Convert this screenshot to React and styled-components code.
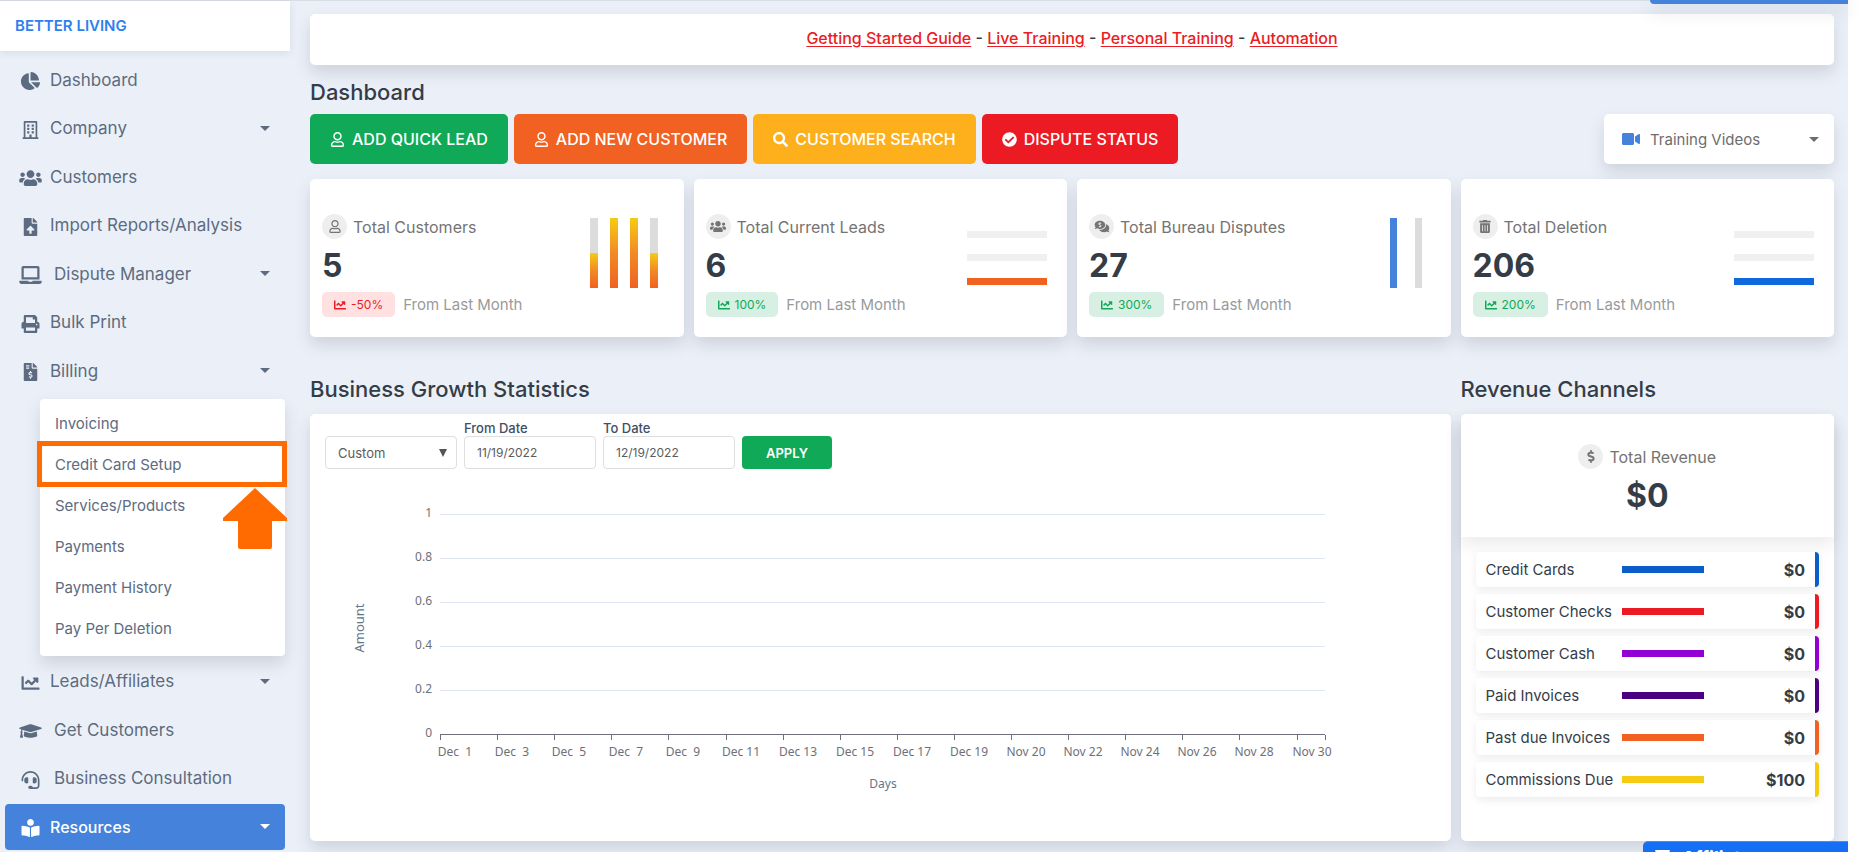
import React, { useState } from 'react';
import styled, { createGlobalStyle } from 'styled-components';
import {
    FaBookReader,
    FaChartLine,
    FaChartPie,
    FaCheckCircle,
    FaCommentsDollar,
    FaDollarSign,
    FaFileInvoiceDollar,
    FaFileUpload,
    FaFilter,
    FaGraduationCap,
    FaHeadset,
    FaLaptop,
    FaPrint,
    FaRegBuilding,
    FaRegUser,
    FaSearch,
    FaTrashAlt,
    FaUsers,
    FaVideo
} from 'react-icons/fa';

const GlobalStyle = createGlobalStyle`
    * {
        box-sizing: border-box;
    }

    body {
        margin: 0;
        background: #fff;
        color: #343d47;
        font-family: Inter, "Open Sans", sans-serif;
        font-size: 15px;
    }

    button, input, select {
        font-family: inherit;
    }
`;

const shadow = '0 8px 16px rgba(40, 50, 70, 0.15)';

const Layout = styled.div`
    display: flex;
    min-height: 100vh;
    margin-right: 14px;
    background: #ebf0f8;
    border-top: 1px solid #d8dde6;
`;

const Sidebar = styled.aside`
    flex: none;
    display: flex;
    flex-direction: column;
    width: 290px;
    height: calc(100vh - 1px);
    padding-bottom: 2px;
`;

const Brand = styled.a`
    padding: 0 15px;
    background: #fff;
    box-shadow: 0 2px 8px rgba(40, 50, 70, 0.1);
    color: #2f80ed;
    font-size: 15px;
    font-weight: 600;
    line-height: 50px;
    text-decoration: none;
`;

const NavList = styled.ul`
    flex: 1;
    display: flex;
    flex-direction: column;
    justify-content: space-between;
    margin: 0;
    padding: 6px 5px 0;
    list-style: none;
`;

const NavItem = styled.li``;

const NavLink = styled.a`
    display: flex;
    align-items: center;
    height: 46px;
    padding: 0 15px 1px 14px;
    border-radius: 4px;
    background: ${({ $active }) => ($active ? '#4482db' : 'transparent')};
    color: ${({ $active }) => ($active ? '#fff' : '#5d6b80')};
    font-size: ${({ $active }) => ($active ? 16 : 17)}px;
    font-weight: ${({ $active }) => ($active ? 500 : 400)};
    text-decoration: none;
`;

const NavIcon = styled.span`
    display: flex;
    justify-content: center;
    width: 23px;
    margin-right: ${({ $wide }) => ($wide ? 12 : 8)}px;
    padding-top: 3px;

    svg {
        width: 23px;
        height: 18px;
    }
`;

const Caret = styled.span`
    margin-left: auto;
    border-top: 5px solid currentColor;
    border-right: 5px solid transparent;
    border-left: 5px solid transparent;
`;

const SubMenu = styled.ul`
    margin: 5px 0 0 35px;
    padding: 4px 0 7px;
    border-radius: 4px;
    background: #fff;
    box-shadow: ${shadow};
    list-style: none;
`;

const SubItem = styled.li`
    position: relative;
`;

const SubLink = styled.a`
    display: block;
    padding: 0 15px;
    color: #5d6b80;
    font-size: 15px;
    line-height: 41px;
    text-decoration: none;
`;

const Highlight = styled.span`
    position: absolute;
    inset: -3px -2px -2px -3px;
    border: 5px solid #ff6b00;
    pointer-events: none;
`;

const Pointer = styled.svg`
    position: absolute;
    top: 44px;
    right: -2px;
    z-index: 1;
`;

const Main = styled.main`
    flex: 1;
    min-width: 0;
    padding: 13px 14px 10px 20px;
`;

const Card = styled.section`
    border-radius: 5px;
    background: #fff;
    box-shadow: ${shadow};
`;

const Notice = styled(Card)`
    padding: 14px 15px 16px;
    font-weight: 500;
    font-size: 16px;
    line-height: 21px;
    text-align: center;
`;

const NoticeLink = styled.a`
    color: #eb1c24;
    text-underline-offset: 2px;
`;

const Title = styled.h1`
    margin: 13px 0 8px;
    font-size: 22px;
    font-weight: 500;
    line-height: 28px;
`;

const SectionTitle = styled.h2`
    margin: 38px 0 11px;
    font-size: 22px;
    font-weight: 500;
    line-height: 28px;
`;

const Actions = styled.div`
    display: flex;
    gap: 6px;
    margin-bottom: 15px;
`;

const ActionButton = styled.button`
    display: flex;
    align-items: center;
    gap: 7px;
    height: 50px;
    padding: 0 20px;
    border: 0;
    border-radius: 5px;
    background: ${({ $color }) => $color};
    color: #fff;
    font-size: 16px;
    font-weight: 500;

    svg {
        width: 15px;
        height: 15px;
    }
`;

const VideosButton = styled.button`
    display: flex;
    align-items: center;
    gap: 10px;
    width: 230px;
    height: 50px;
    margin-left: auto;
    padding: 0 15px 0 18px;
    border: 0;
    border-radius: 5px;
    background: #fff;
    box-shadow: ${shadow};
    color: #6d6d6d;
    font-size: 15px;

    svg {
        color: #4482db;
        font-size: 18px;
    }
`;

const Grid = styled.div`
    display: grid;
    grid-template-columns: repeat(4, 1fr);
    column-gap: 10px;
`;

const Stat = styled(Card)`
    display: flex;
    justify-content: space-between;
    padding: 35px 20px 20px 12px;
`;

const StatHead = styled.div`
    display: flex;
    align-items: center;
    gap: 6px;
    height: 25px;
    color: #747474;
    font-size: 16px;
`;

const Round = styled.span`
    display: flex;
    align-items: center;
    justify-content: center;
    width: 25px;
    height: 25px;
    border-radius: 50%;
    background: #eee;

    svg {
        width: 16px;
        height: 13px;
    }
`;

const StatValue = styled.div`
    font-size: 32px;
    font-weight: 700;
    line-height: 53px;
`;

const StatFoot = styled.div`
    display: flex;
    align-items: center;
    gap: 8px;
    color: #9a9a9a;
    font-size: 15px;
`;

const Badge = styled.span`
    display: flex;
    align-items: center;
    gap: 5px;
    height: 25px;
    padding: 0 12px;
    border-radius: 5px;
    background: ${({ $down }) => ($down ? '#ffe1e2' : '#d8f0e3')};
    color: ${({ $down }) => ($down ? '#eb1c24' : '#10a957')};
    font-size: 12px;
`;

const MiniChart = styled.svg`
    flex: none;
    margin-top: 4px;
`;

const Growth = styled.div`
    grid-column: span 3;
`;

const Revenue = styled.div`
    display: flex;
    flex-direction: column;
`;

const GrowthCard = styled(Card)`
    padding: 6px 0 10px;
`;

const Filters = styled.form`
    display: flex;
    align-items: flex-end;
    gap: 7px;
    padding-left: 15px;
`;

const Field = styled.div`
    position: relative;
    display: flex;
    flex-direction: column;
    width: 132px;
`;

const FieldLabel = styled.label`
    color: #3f4f66;
    font-size: 13px;
    font-weight: 500;
    line-height: 16px;
`;

const Input = styled.input`
    width: 100%;
    height: 33px;
    padding: 0 12px;
    border: 1px solid #dedede;
    border-radius: 4px;
    background: #fff;
    color: #5c5c5c;
    font-size: 12px;
`;

const Select = styled.select`
    width: 100%;
    height: 33px;
    padding: 0 12px;
    border: 1px solid #dedede;
    border-radius: 4px;
    background: #fff;
    color: #5c5c5c;
    font-size: 13px;
    appearance: none;
`;

const SelectArrow = styled.svg`
    position: absolute;
    top: 13px;
    right: 10px;
    pointer-events: none;
`;

const ApplyButton = styled.button`
    width: 90px;
    height: 33px;
    border: 0;
    border-radius: 4px;
    background: #10a957;
    color: #fff;
    font-size: 13px;
    font-weight: 600;
`;

const Chart = styled.svg`
    display: block;
    max-width: 100%;
    margin-top: 10px;

    text {
        fill: #6e7079;
        font-family: "Noto Sans", sans-serif;
        font-size: 12px;
    }
`;

const AxisTitle = styled.text`
    && {
        fill: #64748b;
        font-size: ${({ $size }) => $size}px;
    }
`;

const RevenueCard = styled(Card)`
    flex: 1;
`;

const RevenueTotal = styled.div`
    display: flex;
    flex-direction: column;
    align-items: center;
    padding: 30px 0 15px;
    box-shadow: 0 8px 16px rgba(0, 0, 0, 0.08);
`;

const ChannelList = styled.ul`
    display: flex;
    flex-direction: column;
    gap: 7px;
    margin: 0;
    padding: 15px;
    list-style: none;
`;

const Channel = styled.li`
    display: flex;
    align-items: center;
    height: 35px;
    padding: 0 10px;
    border-right: 4px solid ${({ $color }) => $color};
    border-radius: 4px;
    background: #fff;
    box-shadow: 0 3px 8px rgba(0, 0, 0, 0.08);
    font-size: 15px;
`;

const ChannelName = styled.span`
    width: 136px;
    white-space: nowrap;
`;

const ChannelBar = styled.span`
    width: 82px;
    height: 7px;
    background: ${({ $color }) => $color};
`;

const ChannelValue = styled.strong`
    margin-left: auto;
    font-size: 16px;
    font-weight: 700;
`;

const TopTab = styled.div`
    position: fixed;
    top: 0;
    right: 14px;
    width: 198px;
    height: 4px;
    border-radius: 0 0 0 4px;
    background: #4482db;
    box-shadow: 0 6px 16px rgba(40, 50, 70, 0.25);
`;

const AffiliateButton = styled.button`
    position: fixed;
    right: 14px;
    bottom: -20px;
    display: flex;
    align-items: center;
    gap: 12px;
    width: 205px;
    height: 31px;
    padding: 0 12px;
    border: 0;
    border-top: 1px solid #6d87b0;
    border-radius: 5px 0 0 0;
    background: #146ff5;
    color: #fff;
    font-size: 18px;
    font-weight: 700;

    svg {
        width: 15px;
        height: 15px;
    }
`;

const billingLinks = [
    'Invoicing',
    'Credit Card Setup',
    'Services/Products',
    'Payments',
    'Payment History',
    'Pay Per Deletion'
];

const navItems = [
    { label: 'Dashboard', icon: FaChartPie },
    { label: 'Company', icon: FaRegBuilding, caret: true },
    { label: 'Customers', icon: FaUsers },
    { label: 'Import Reports/Analysis', icon: FaFileUpload },
    { label: 'Dispute Manager', icon: FaLaptop, caret: true, wide: true },
    { label: 'Bulk Print', icon: FaPrint },
    { label: 'Billing', icon: FaFileInvoiceDollar, caret: true, links: billingLinks },
    { label: 'Leads/Affiliates', icon: FaChartLine, caret: true },
    { label: 'Get Customers', icon: FaGraduationCap, wide: true },
    { label: 'Business Consultation', icon: FaHeadset, wide: true },
    { label: 'Resources', icon: FaBookReader, caret: true, active: true }
];

const actions = [
    { label: 'ADD QUICK LEAD', icon: FaRegUser, color: '#10a957' },
    { label: 'ADD NEW CUSTOMER', icon: FaRegUser, color: '#f06122' },
    { label: 'CUSTOMER SEARCH', icon: FaSearch, color: '#fdb01c' },
    { label: 'DISPUTE STATUS', icon: FaCheckCircle, color: '#ec1b23' }
];

const channels = [
    { name: 'Credit Cards', value: '$0', color: '#0b5ec9' },
    { name: 'Customer Checks', value: '$0', color: '#ec1b23' },
    { name: 'Customer Cash', value: '$0', color: '#9400d3' },
    { name: 'Paid Invoices', value: '$0', color: '#4b0082' },
    { name: 'Past due Invoices', value: '$0', color: '#f06122' },
    { name: 'Commissions Due', value: '$100', color: '#f6cb14' }
];

const days = [
    'Dec  1', 'Dec  3', 'Dec  5', 'Dec  7', 'Dec  9', 'Dec 11', 'Dec 13', 'Dec 15',
    'Dec 17', 'Dec 19', 'Nov 20', 'Nov 22', 'Nov 24', 'Nov 26', 'Nov 28', 'Nov 30'
];

const amounts = ['1', '0.8', '0.6', '0.4', '0.2', '0'];

const CustomerBars = () => (
    <MiniChart width="80" height="70" aria-hidden="true">
        <defs>
            <linearGradient id="heat" x1="0" y1="0" x2="0" y2="1">
                <stop offset="0" stopColor="#f6cb14" />
                <stop offset="0.5" stopColor="#f28a25" />
                <stop offset="1" stopColor="#f06122" />
            </linearGradient>
        </defs>
        {[35, 70, 70, 35].map((height, i) => (
            <g key={i}>
                <rect x={6 + i * 20} y="0" width="8" height="70" fill="#dcdcdc" />
                <rect x={6 + i * 20} y={70 - height} width="8" height={height} fill="url(#heat)" />
            </g>
        ))}
    </MiniChart>
);

const LineBars = ({ color }) => (
    <MiniChart width="80" height="70" aria-hidden="true">
        <rect y="13" width="80" height="7" fill="#f0f0f0" />
        <rect y="36" width="80" height="7" fill="#f0f0f0" />
        <rect y="60" width="80" height="7" fill={color} />
    </MiniChart>
);

const DisputeBars = () => (
    <MiniChart width="80" height="70" aria-hidden="true">
        <rect x="39" width="7" height="70" fill="#4482db" />
        <rect x="64" width="7" height="70" fill="#dcdcdc" />
    </MiniChart>
);

const stats = [
    { label: 'Total Customers', value: '5', change: '-50%', down: true, icon: FaRegUser, chart: <CustomerBars /> },
    { label: 'Total Current Leads', value: '6', change: '100%', icon: FaUsers, chart: <LineBars color="#f06122" /> },
    { label: 'Total Bureau Disputes', value: '27', change: '300%', icon: FaCommentsDollar, chart: <DisputeBars /> },
    { label: 'Total Deletion', value: '206', change: '200%', icon: FaTrashAlt, chart: <LineBars color="#0f68dd" /> }
];

const SideNav = () => (
    <Sidebar>
        <Brand href="#">BETTER LIVING</Brand>
        <NavList>
            {navItems.map(({ label, icon: Icon, caret, wide, active, links }) => (
                <NavItem key={label}>
                    <NavLink href="#" $active={active}>
                        <NavIcon $wide={wide}><Icon /></NavIcon>
                        {label}
                        {caret && <Caret />}
                    </NavLink>
                    {links && (
                        <SubMenu>
                            {links.map((link) => (
                                <SubItem key={link}>
                                    <SubLink href="#">{link}</SubLink>
                                    {link === 'Credit Card Setup' && (
                                        <>
                                            <Highlight />
                                            <Pointer width="64" height="61" viewBox="0 0 64 61" aria-hidden="true">
                                                <path d="M32 0 64 30v3H49v26a2 2 0 0 1-2 2H17a2 2 0 0 1-2-2V33H0v-3Z" fill="#ff6b00" />
                                            </Pointer>
                                        </>
                                    )}
                                </SubItem>
                            ))}
                        </SubMenu>
                    )}
                </NavItem>
            ))}
        </NavList>
    </Sidebar>
);

const GrowthChart = () => (
    <Chart width="1140" height="352" viewBox="0 0 1140 352" role="img" aria-label="Amount by day">
        {amounts.map((amount, i) => (
            <g key={amount}>
                <line
                    x1="130"
                    x2="1015"
                    y1={35.5 + i * 44}
                    y2={35.5 + i * 44}
                    stroke={amount === '0' ? '#6e7079' : '#e0e6f1'}
                />
                <text x="122" y={38 + i * 44} textAnchor="end">{amount}</text>
            </g>
        ))}
        {days.map((day, i) => (
            <g key={day}>
                <line
                    x1={Math.round(130 + i * 57.1) + 0.5}
                    x2={Math.round(130 + i * 57.1) + 0.5}
                    y1="256"
                    y2="261"
                    stroke="#6e7079"
                />
                <text x={Math.round(145 + i * 57.1)} y="277" textAnchor="middle" xmlSpace="preserve">{day}</text>
            </g>
        ))}
        <line x1="1015.5" x2="1015.5" y1="256" y2="261" stroke="#6e7079" />
        <AxisTitle $size={12} x="573" y="309" textAnchor="middle">Days</AxisTitle>
        <AxisTitle $size={13} transform="translate(54 149) rotate(-90)" textAnchor="middle">Amount</AxisTitle>
    </Chart>
);

const App = () => {
    const [range, setRange] = useState('Custom');
    const [from, setFrom] = useState('11/19/2022');
    const [to, setTo] = useState('12/19/2022');

    return (
        <>
            <GlobalStyle />
            <Layout>
                <SideNav />
                <Main>
                    <Notice>
                        <NoticeLink href="#">Getting Started Guide</NoticeLink>
                        {' - '}
                        <NoticeLink href="#">Live Training</NoticeLink>
                        {' - '}
                        <NoticeLink href="#">Personal Training</NoticeLink>
                        {' - '}
                        <NoticeLink href="#">Automation</NoticeLink>
                    </Notice>
                    <Title>Dashboard</Title>
                    <Actions>
                        {actions.map(({ label, icon: Icon, color }) => (
                            <ActionButton key={label} type="button" $color={color}>
                                <Icon />
                                {label}
                            </ActionButton>
                        ))}
                        <VideosButton type="button">
                            <FaVideo />
                            Training Videos
                            <Caret />
                        </VideosButton>
                    </Actions>
                    <Grid>
                        {stats.map(({ label, value, change, down, icon: Icon, chart }) => (
                            <Stat key={label}>
                                <div>
                                    <StatHead>
                                        <Round><Icon /></Round>
                                        {label}
                                    </StatHead>
                                    <StatValue>{value}</StatValue>
                                    <StatFoot>
                                        <Badge $down={down}>
                                            <FaChartLine />
                                            {change}
                                        </Badge>
                                        From Last Month
                                    </StatFoot>
                                </div>
                                {chart}
                            </Stat>
                        ))}
                    </Grid>
                    <Grid>
                        <Growth>
                            <SectionTitle>Business Growth Statistics</SectionTitle>
                            <GrowthCard>
                                <Filters onSubmit={(e) => e.preventDefault()}>
                                    <Field>
                                        <Select
                                            aria-label="Range"
                                            value={range}
                                            onChange={(e) => setRange(e.target.value)}
                                        >
                                            <option>Custom</option>
                                        </Select>
                                        <SelectArrow width="8" height="8" aria-hidden="true">
                                            <path d="M0 0h8L4 8Z" fill="#555" />
                                        </SelectArrow>
                                    </Field>
                                    <Field>
                                        <FieldLabel htmlFor="from">From Date</FieldLabel>
                                        <Input id="from" value={from} onChange={(e) => setFrom(e.target.value)} />
                                    </Field>
                                    <Field>
                                        <FieldLabel htmlFor="to">To Date</FieldLabel>
                                        <Input id="to" value={to} onChange={(e) => setTo(e.target.value)} />
                                    </Field>
                                    <ApplyButton type="submit">APPLY</ApplyButton>
                                </Filters>
                                <GrowthChart />
                            </GrowthCard>
                        </Growth>
                        <Revenue>
                            <SectionTitle>Revenue Channels</SectionTitle>
                            <RevenueCard>
                                <RevenueTotal>
                                    <StatHead>
                                        <Round><FaDollarSign /></Round>
                                        Total Revenue
                                    </StatHead>
                                    <StatValue>$0</StatValue>
                                </RevenueTotal>
                                <ChannelList>
                                    {channels.map(({ name, value, color }) => (
                                        <Channel key={name} $color={color}>
                                            <ChannelName>{name}</ChannelName>
                                            <ChannelBar $color={color} />
                                            <ChannelValue>{value}</ChannelValue>
                                        </Channel>
                                    ))}
                                </ChannelList>
                            </RevenueCard>
                        </Revenue>
                    </Grid>
                </Main>
            </Layout>
            <TopTab />
            <AffiliateButton type="button">
                <FaFilter />
                Affiliate
            </AffiliateButton>
        </>
    );
};

export default App;
